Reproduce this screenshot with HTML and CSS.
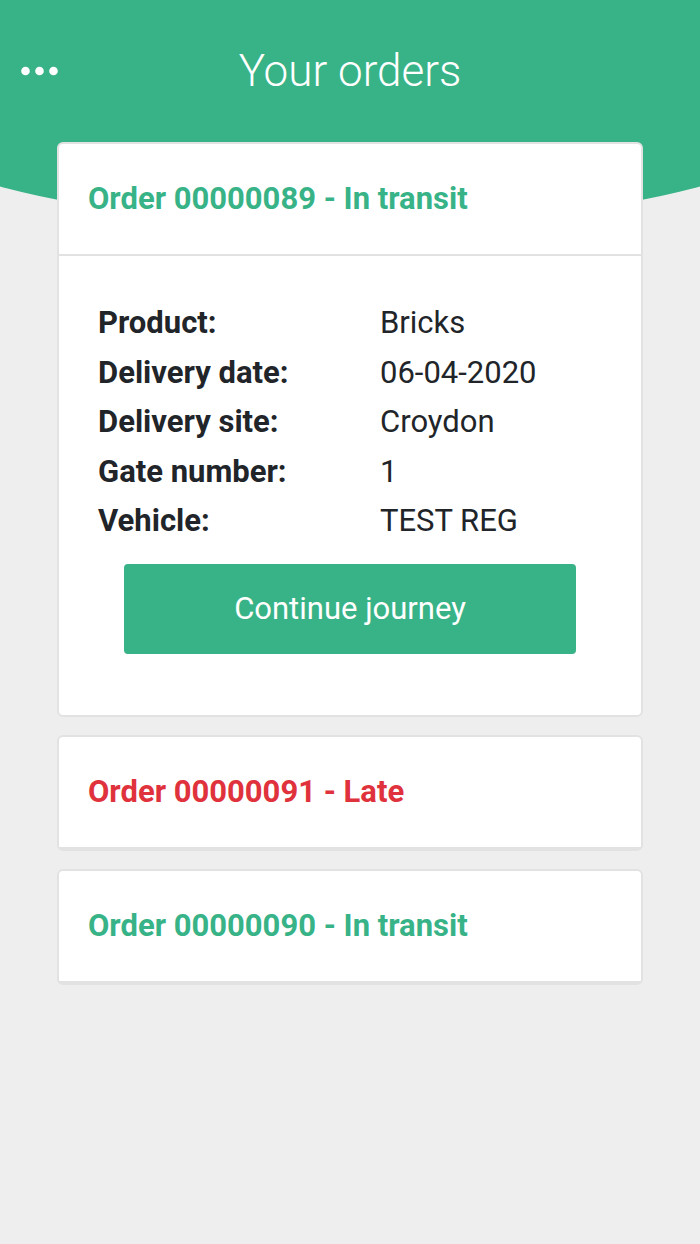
FILE: index.html
```html
<!DOCTYPE html>
<html>
<head>
    <title>Your orders</title>
    <link rel="stylesheet" href="styles.css">
</head>
<body>
    <div class="header-wrap">
        <div class="header">
            <div class="header-bar">
                <button class="menu-btn" aria-label="Menu">
                    <svg width="38" height="10" viewBox="0 0 38 10">
                        <circle cx="4.5" cy="5" r="4.3" fill="#fff"/>
                        <circle cx="18.5" cy="5" r="4.3" fill="#fff"/>
                        <circle cx="32.5" cy="5" r="4.3" fill="#fff"/>
                    </svg>
                </button>
                <h1>Your orders</h1>
                <div></div>
            </div>
        </div>
    </div>

    <div class="orders">
        <div class="card">
            <div class="card-header">
                <h2 class="order-title transit">Order 00000089 - In transit</h2>
            </div>
            <div class="card-body">
                <div class="details">
                    <div class="label">Product:</div>
                    <div class="value">Bricks</div>
                    <div class="label">Delivery date:</div>
                    <div class="value">06-04-2020</div>
                    <div class="label">Delivery site:</div>
                    <div class="value">Croydon</div>
                    <div class="label">Gate number:</div>
                    <div class="value">1</div>
                    <div class="label">Vehicle:</div>
                    <div class="value">TEST REG</div>
                </div>
                <button class="continue-btn">Continue journey</button>
            </div>
        </div>

        <div class="card">
            <div class="card-header">
                <h2 class="order-title late">Order 00000091 - Late</h2>
            </div>
        </div>

        <div class="card">
            <div class="card-header">
                <h2 class="order-title transit">Order 00000090 - In transit</h2>
            </div>
        </div>
    </div>
</body>
</html>
```

FILE: styles.css
```css
body {
    margin: 0;
    background-color: #eeeeee;
    font-family: Roboto, "Liberation Sans", sans-serif;
    color: #212529;
}
.header-wrap {
    overflow: hidden;
    margin-bottom: -83px;
}
.header {
    box-sizing: border-box;
    height: 225px;
    margin: 0 -140px;
    padding: 43px 140px 0;
    background-color: #38b387;
    border-radius: 0 0 50% 50% / 0 0 128px 128px;
}
.header-bar {
    display: grid;
    grid-template-columns: 1fr auto 1fr;
    align-items: center;
}
.header-bar h1 {
    margin: 0;
    font-size: 44px;
    line-height: 56px;
    font-weight: 300;
    color: white;
}
.menu-btn {
    justify-self: start;
    display: flex;
    margin-left: 21px;
    padding: 0;
    border: none;
    background: none;
}
.orders {
    margin: 0 57px;
}
.card {
    background-color: white;
    border: 2px solid #e2e2e2;
    border-radius: 6px;
    margin-bottom: 18px;
}
.card-header {
    padding: 36px 29px;
    border-bottom: 2px solid #e2e2e2;
}
.order-title {
    margin: 0;
    font-size: 31px;
    line-height: 38px;
    font-weight: 700;
}
.transit {
    color: #38b387;
}
.late {
    color: #e0323c;
}
.card-body {
    padding: 42px 39px 61px;
}
.details {
    display: grid;
    grid-template-columns: 282px 1fr;
    font-size: 31px;
    line-height: 49.5px;
}
.label {
    font-weight: 700;
}
.continue-btn {
    display: block;
    width: 452px;
    height: 90px;
    margin: 18px auto 0;
    background-color: #38b387;
    color: white;
    font-family: inherit;
    font-size: 31px;
    border: none;
    border-radius: 4px;
}
```
